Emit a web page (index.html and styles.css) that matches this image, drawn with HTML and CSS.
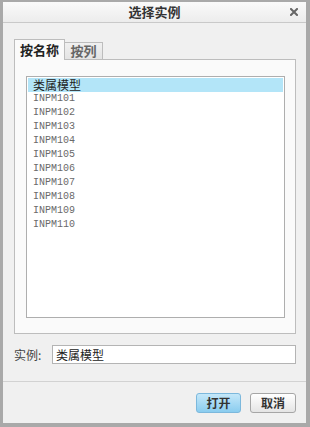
FILE: index.html
```html
<!DOCTYPE html>
<html lang="zh">
<head>
<meta charset="UTF-8">
<title>选择实例</title>
<link rel="stylesheet" href="styles.css">
</head>
<body>
  <div class="dialog">
    <div class="titlebar">
      <span></span>
      <div class="title">选择实例</div>
      <div class="close">
        <svg width="8" height="8" viewBox="0 0 8 8">
          <path d="M1 1 L7 7 M7 1 L1 7" stroke="#666" stroke-width="2" stroke-linecap="square"/>
        </svg>
      </div>
    </div>

    <div class="body">
      <div class="tabs">
        <div class="tab active">按名称</div>
        <div class="tab">按列</div>
      </div>
      <div class="panel">
        <div class="list">
          <div class="row selected">类属模型</div>
          <div class="row">INPM101</div>
          <div class="row">INPM102</div>
          <div class="row">INPM103</div>
          <div class="row">INPM104</div>
          <div class="row">INPM105</div>
          <div class="row">INPM106</div>
          <div class="row">INPM107</div>
          <div class="row">INPM108</div>
          <div class="row">INPM109</div>
          <div class="row">INPM110</div>
        </div>
      </div>
      <div class="field">
        <label class="label">实例:</label>
        <div class="input">类属模型</div>
      </div>
    </div>

    <div class="footer">
      <button class="button primary">打开</button>
      <button class="button">取消</button>
    </div>
  </div>
</body>
</html>
```

FILE: styles.css
```css
body {
  margin: 0;
  background: #fff;
  font-family: "Noto Sans CJK SC", "Noto Sans", sans-serif;
}

.dialog {
  width: 310px;
  height: 427px;
  box-sizing: border-box;
  border-style: solid;
  border-color: #a9a9a9;
  border-width: 2px 4px 4px 3px;
  background: #f0f0f0;
  display: flex;
  flex-direction: column;
}

.titlebar {
  height: 20px;
  border-bottom: 1px solid #c9c9c9;
  background: linear-gradient(#fafafa, #ececec);
  display: grid;
  grid-template-columns: 1fr auto 1fr;
  align-items: center;
}

.title {
  font-size: 13px;
  font-weight: bold;
  color: #333;
  line-height: 20px;
}

.close {
  justify-self: end;
  padding-right: 8px;
  display: flex;
  align-items: center;
}

.body {
  padding: 16px 10px 0 11px;
}

.tabs {
  display: flex;
  align-items: flex-end;
  margin-bottom: -1px;
  position: relative;
  z-index: 1;
}

.tab {
  box-sizing: border-box;
  font-size: 13px;
  font-weight: bold;
  text-align: center;
}

.tab.active {
  width: 51px;
  height: 21px;
  line-height: 20px;
  border: 1px solid #bdbdbd;
  border-bottom: none;
  background: #fafafa;
  color: #222;
}

.tab:not(.active) {
  width: 38px;
  height: 18px;
  line-height: 16px;
  border: 1px solid #bdbdbd;
  border-left: none;
  background: linear-gradient(#f0f0f0, #e4e4e4);
  color: #666;
}

.panel {
  height: 275px;
  box-sizing: border-box;
  border: 1px solid #bdbdbd;
  background: #fafafa;
  padding: 16px 10px 0 11px;
}

.list {
  height: 242px;
  box-sizing: border-box;
  border: 1px solid #aeaeae;
  background: #fff;
  padding: 1px;
}

.row {
  height: 14px;
  line-height: 14px;
  padding-left: 5px;
  font-family: "Liberation Mono", monospace;
  font-size: 10px;
  color: #6a6a6a;
}

.row.selected {
  background: #b3e5f8;
  font-family: "Noto Sans CJK SC", sans-serif;
  font-size: 12px;
  color: #222;
}

.field {
  display: flex;
  align-items: center;
  margin-top: 11px;
}

.label {
  width: 38px;
  font-size: 12px;
  color: #444;
}

.input {
  flex: 1;
  height: 19px;
  box-sizing: border-box;
  border: 1px solid #b4b4b4;
  background: #fff;
  padding-left: 3px;
  font-size: 12px;
  line-height: 17px;
  color: #222;
}

.footer {
  margin-top: 17px;
  border-top: 1px solid #d2d2d2;
  padding: 11px 10px 0 0;
  display: flex;
  justify-content: flex-end;
  gap: 9px;
}

.button {
  height: 20px;
  width: 46px;
  box-sizing: border-box;
  border: 1px solid #a6a6a6;
  border-radius: 3px;
  background: linear-gradient(#ffffff, #e4e4e4);
  font-family: "Noto Sans CJK SC", sans-serif;
  font-size: 12px;
  font-weight: bold;
  color: #333;
  padding: 0;
  line-height: 18px;
}

.button.primary {
  width: 45px;
  border-color: #7cb8dc;
  background: linear-gradient(#c4e7f9, #8accef);
}
```
